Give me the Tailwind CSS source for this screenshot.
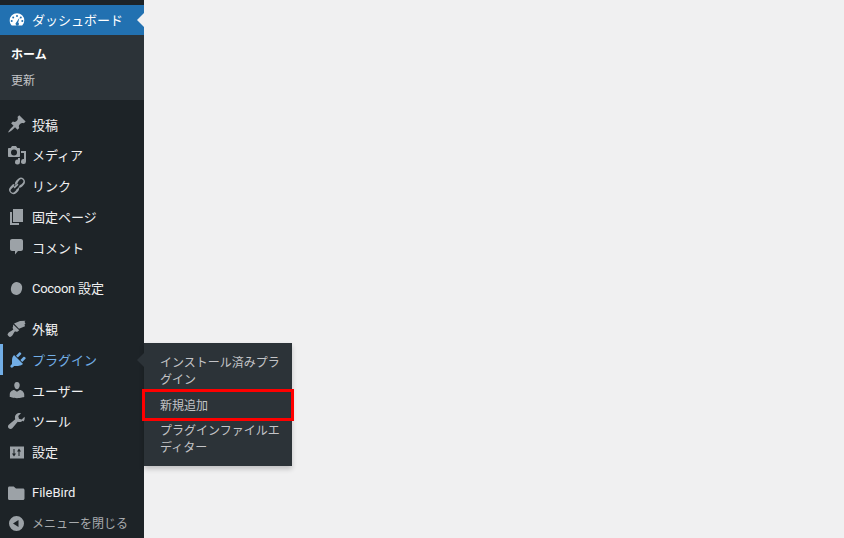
<!DOCTYPE html>
<html lang="ja">
<head>
    <meta charset="UTF-8">
    <title>プラグイン</title>
    <script src="https://cdn.jsdelivr.net/npm/@tailwindcss/browser@4"></script>
</head>
<body class="bg-[#f0f0f1] h-[538px] overflow-hidden font-['Noto_Sans_CJK_JP','Noto_Sans',sans-serif]">
    <aside class="w-36 h-[538px] bg-[#1d2327] pt-[5px] text-[13px] text-[#f0f0f1] relative">
        <!-- dashboard -->
        <a class="h-[30px] bg-[#2271b1] text-white flex items-center relative">
            <span class="w-8 flex justify-center pl-[1px]">
                <svg class="w-4 h-4" viewBox="0 0 16 16" fill="#fff"><path d="M8 1.200A7.300 7.300 0 0 0 .7 8.500c0 2 .8 3.800 2.100 5.100h10.400a7.300 7.300 0 0 0 2.100-5.100A7.300 7.300 0 0 0 8 1.200zM8 3a1 1 0 1 1 0 2 1 1 0 0 1 0-2zM4.200 4.600a1 1 0 1 1 0 2 1 1 0 0 1 0-2zm7.600 0a1 1 0 1 1 0 2 1 1 0 0 1 0-2zM2.700 8a1 1 0 1 1 0 2 1 1 0 0 1 0-2zm10.600 0a1 1 0 1 1 0 2 1 1 0 0 1 0-2zM10.600 5.400l-1.400 5a1.700 1.700 0 1 1-2 .1z" fill-rule="evenodd"/></svg>
            </span>
            <span>ダッシュボード</span>
            <span class="absolute right-0 top-[8px] border-y-[7px] border-y-transparent border-r-[7px] border-r-[#f0f0f1]"></span>
        </a>
        <div class="h-[65px] bg-[#2c3338] text-xs pt-[6px]">
            <div class="h-[26px] pl-[11px] flex items-center font-bold text-white">ホーム</div>
            <div class="h-[26px] pl-[11px] flex items-center text-[#c3c4c7]">更新</div>
        </div>
        <nav class="pt-[9px]">
            <a class="h-[30.75px] flex items-center">
                <span class="w-8 flex justify-center pl-[1px]"><svg class="w-5 h-5" viewBox="0 0 20 20" fill="#9ca2a7"><path d="M10.440 3.020l1.820-1.820 6.360 6.350-1.830 1.820c-1.050-.68-2.480-.57-3.410.36l-.75.75c-.92.93-1.040 2.350-.35 3.410l-1.830 1.820-2.410-2.410-2.800 2.790c-.42.42-3.380 2.710-3.800 2.290s1.860-3.390 2.280-3.810l2.790-2.790L4.100 9.360l1.830-1.820c1.050.69 2.480.57 3.400-.36l.75-.75c.93-.92 1.050-2.350.36-3.410z"/></svg></span>
                <span>投稿</span>
            </a>
            <a class="h-[30.75px] flex items-center">
                <span class="w-8 flex justify-center pl-[1px]"><svg class="w-5 h-5" viewBox="0 0 20 20" fill="#9ca2a7"><path d="M13 11V4c0-.55-.45-1-1-1h-1.670L9 1H5L3.670 3H2c-.55 0-1 .45-1 1v7c0 .55.45 1 1 1h10c.55 0 1-.45 1-1zM7 4.500a3 3 0 1 1 0 6 3 3 0 0 1 0-6zM14 6h5v10.500a2.500 2.500 0 1 1-2-2.450V8h-3V6zm-1 8.500V17a2.500 2.500 0 1 1-2-2.450V13h2v1.500z"/></svg></span>
                <span>メディア</span>
            </a>
            <a class="h-[30.75px] flex items-center">
                <span class="w-8 flex justify-center"><svg class="w-5 h-5" viewBox="0 0 20 20" fill="#9ca2a7"><path fill-rule="evenodd" d="M17.740 2.760a4.320 4.320 0 0 1 0 6.100l-1.530 1.520c-1.120 1.120-2.700 1.510-4.140 1.190.98-.99 1.570-1.860 1.830-2.600.74-.13 1.030-.3 1.300-.57l1.530-1.520a2.160 2.160 0 0 0-3.050-3.060L12.160 5.840c-.28.28-.46.62-.56 1.290-.74.26-1.610.85-2.600 1.830-.32-1.440.07-3.020 1.190-4.140l1.520-1.520a4.320 4.320 0 0 1 6.030-.54zM8.380 8.120c-1.120.1-1.920.5-2.500 1.140L4.260 10.880a4.320 4.320 0 0 0 6.100 6.100l1.520-1.520c1.120-1.120 1.510-2.700 1.190-4.140-.99.98-1.860 1.570-2.600 1.830-.1.670-.28 1.010-.56 1.290l-1.530 1.530a2.160 2.160 0 0 1-3.050-3.060l1.530-1.520c.29-.29.72-.54 1.190-.66z"/><path d="M7.500 11.300l3.800-3.800 1.200 1.200-3.800 3.800z"/></svg></span>
                <span>リンク</span>
            </a>
            <a class="h-[30.75px] flex items-center">
                <span class="w-8 flex justify-center"><svg class="w-5 h-5" viewBox="0 0 20 20" fill="#9ca2a7"><path d="M7 15V2h10v13H7zm-1 1h7v2H4V5h2v11z"/></svg></span>
                <span>固定ページ</span>
            </a>
            <a class="h-[30.75px] flex items-center">
                <span class="w-8 flex justify-center"><svg class="w-5 h-5" viewBox="0 0 20 20" fill="#9ca2a7"><path d="M6 2h9c1.100 0 2 .9 2 2v8c0 1.100-.9 2-2 2h-3l-3 3.500V14H6c-1.100 0-2-.9-2-2V4c0-1.100.9-2 2-2z"/></svg></span>
                <span>コメント</span>
            </a>
            <a class="h-[30.75px] mt-[10px] flex items-center">
                <span class="w-8 flex justify-center pt-[1px]"><span class="w-[11px] h-[13px] rounded-full bg-[#9ca2a7] rotate-12"></span></span>
                <span class="pt-[1px] font-['Roboto','Noto_Sans_CJK_JP',sans-serif]"><span class="tracking-[-0.3px]">Cocoon</span> 設定</span>
            </a>
            <a class="h-[30.75px] mt-[10px] flex items-center">
                <span class="w-8 flex justify-center"><svg class="w-5 h-5" viewBox="0 0 20 20" fill="#9ca2a7"><path d="M14 2l5.500-.2-1 1 1 2-1 .5.5 2-6 2.500L8 4.500zM7.200 5.400l6 5.800-1.500 1.300c-.7.5-1.600.5-2.600-.3-.8.8-1.300 1.800-2 3-.7 1.300-1.700 2.500-3.400 2.800-.9-.5-1.700-1.300-2.200-2.200.3-1.700 1.500-2.700 2.800-3.400 1.200-.7 2.200-1.200 3-2-.8-1-.8-1.900-.3-2.600z"/></svg></span>
                <span>外観</span>
            </a>
            <!-- active plugins item -->
            <a class="h-[30.75px] flex items-center text-[#72aee6] border-l-[3px] border-[#72aee6]">
                <span class="w-[29px] flex justify-center"><svg class="w-5 h-5" viewBox="0 0 20 20" fill="#72aee6"><path d="M13.110 4.360L9.870 7.600 8 5.730l3.240-3.240c.35-.34 1.050-.2 1.560.32.52.51.66 1.210.31 1.550zm-8 1.770l.91-1.120 9.010 9.010-1.190.84c-.71.71-2.630 1.160-3.820 1.160H6.140L4.900 17.260c-.59.59-1.540.59-2.120 0a1.490 1.490 0 0 1 0-2.120l1.240-1.240v-3.880c0-1.130.35-3.020 1.090-3.890zm7.260 3.970l3.240-3.240c.34-.35 1.040-.21 1.550.31.52.51.66 1.210.31 1.550l-3.240 3.250z"/></svg></span>
                <span>プラグイン</span>
            </a>
            <a class="h-[30.75px] flex items-center">
                <span class="w-8 flex justify-center pl-[1px]"><svg class="w-5 h-5" viewBox="0 0 20 20" fill="#9ca2a7"><path d="M10 9.250c-2.270 0-2.730-3.440-2.730-3.440C7 4.020 7.820 2 9.970 2c2.160 0 2.980 2.020 2.710 3.810 0 0-.41 3.440-2.680 3.440zm0 2.570L12.720 10c2.390 0 4.520 2.330 4.520 4.530v2.490s-3.650 1.130-7.240 1.130c-3.650 0-7.240-1.130-7.240-1.130v-2.490c0-2.250 1.940-4.480 4.470-4.480z"/></svg></span>
                <span>ユーザー</span>
            </a>
            <a class="h-[30.75px] flex items-center">
                <span class="w-8 flex justify-center"><svg class="w-5 h-5" viewBox="0 0 20 20" fill="#9ca2a7"><path d="M16.680 9.770c-1.340 1.340-3.300 1.670-4.950.99l-5.410 6.520c-.99.99-2.590.99-3.580 0s-.99-2.590 0-3.570l6.520-5.420c-.68-1.650-.35-3.610.99-4.950 1.280-1.280 3.120-1.640 4.720-1.080l-2.710 2.710.72 2.780 2.780.72 2.710-2.710c.56 1.600.2 3.440-1.080 4.720z"/></svg></span>
                <span>ツール</span>
            </a>
            <a class="h-[30.75px] flex items-center">
                <span class="w-8 flex justify-center"><svg class="w-5 h-5" viewBox="0 0 20 20" fill="#9ca2a7"><path fill-rule="evenodd" d="M4 4.500h14v12H4zM7.500 7v4.500H6l2 3 2-3H8.500V7zm6 7V9.500H15L13 6.500l-2 3h1.500V14z"/></svg></span>
                <span>設定</span>
            </a>
            <a class="h-[30.75px] mt-[10px] flex items-center">
                <span class="w-8 flex justify-center"><svg class="w-5 h-5" viewBox="0 0 20 20" fill="#9ca2a7"><path d="M2 5c0-.8.6-1.500 1.400-1.500h4.300L10 5.500h7c.8 0 1.500.7 1.500 1.500v8.500c0 .8-.7 1.500-1.500 1.500H3.400C2.600 17 2 16.300 2 15.500z"/></svg></span>
                <span class="font-['Roboto','Noto_Sans_CJK_JP',sans-serif]">FileBird</span>
            </a>
            <a class="h-[30.75px] flex items-center text-[#a7aaad]">
                <span class="w-8 flex justify-center"><svg class="w-5 h-5" viewBox="0 0 20 20" fill="#9ca2a7"><path fill-rule="evenodd" d="M10.500 3a7.500 7.500 0 1 1 0 15 7.500 7.500 0 0 1 0-15zm2 4L7 10.500l5.500 3.500z"/></svg></span>
                <span class="text-xs">メニューを閉じる</span>
            </a>
        </nav>
        <!-- flyout submenu -->
        <div class="absolute left-36 top-[343px] w-[148px] h-[123px] bg-[#2c3338] shadow-[0_3px_5px_rgba(0,0,0,0.2)] text-xs text-[#c3c4c7] leading-[17px] pt-[10px]">
            <span class="absolute -left-[7px] top-[10px] border-y-[7px] border-y-transparent border-r-[7px] border-r-[#2c3338]"></span>
            <div class="pl-4 pr-[10px] h-[36px]">インストール済みプラグイン</div>
            <div class="pl-4 pr-[10px] h-[32px] pb-[2px] relative flex items-center">
                新規追加
                <span class="absolute -left-[2px] -right-[2px] top-0 bottom-0 border-[3px] border-[#ff0000]"></span>
            </div>
            <div class="pl-4 pr-[10px]">プラグインファイルエディター</div>
        </div>
    </aside>
</body>
</html>
